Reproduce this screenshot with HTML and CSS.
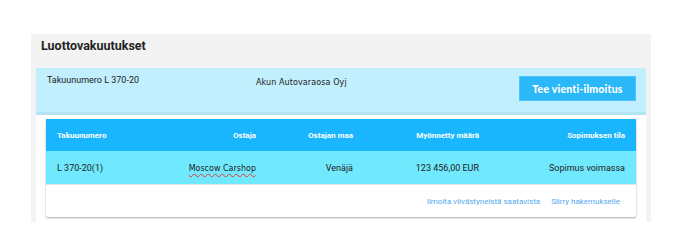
FILE: index.html
```html
<!DOCTYPE html>
<html lang="fi">
<head>
    <meta charset="UTF-8">
    <title>Luottovakuutukset</title>
    <link rel="stylesheet" href="styles.css">
</head>
<body>
    <div class="panel">
        <h2 class="panel-title">Luottovakuutukset</h2>
        <div class="panel-body">
            <div class="policy-head">
                <div class="policy-number">Takuunumero L 370-20</div>
                <div class="policy-company">Akun Autovaraosa Oyj</div>
                <button class="btn-export">Tee vienti-ilmoitus</button>
            </div>

            <div class="card">
                <div class="grid-row grid-head">
                    <div class="cell-left">Takuunumero</div>
                    <div>Ostaja</div>
                    <div>Ostajan maa</div>
                    <div>Myönnetty määrä</div>
                    <div>Sopimuksen tila</div>
                </div>
                <div class="grid-row grid-body">
                    <div class="cell-left">L 370-20(1)</div>
                    <div><span class="buyer">Moscow Carshop</span></div>
                    <div>Venäjä</div>
                    <div>123 456,00 EUR</div>
                    <div>Sopimus voimassa</div>
                </div>
                <div class="card-actions">
                    <a href="#">Ilmoita viivästyneistä saatavista</a>
                    <a href="#">Siirry hakemukselle</a>
                </div>
            </div>
        </div>
    </div>
</body>
</html>
```

FILE: styles.css
```css
body {
    margin: 0;
    background-color: #fff;
    font-family: Roboto, Arial, sans-serif;
    color: #222;
}

.panel {
    margin: 34px 35px 0 31px;
    background-color: #f3f3f3;
    padding: 0 5px;
}

.panel-title {
    margin: 0;
    height: 34px;
    padding-left: 5px;
    font-size: 12.5px;
    font-weight: 700;
    line-height: 24px;
    color: #222;
}

.panel-body {
    background-color: #fff;
    padding-bottom: 5px;
}

.policy-head {
    display: flex;
    align-items: flex-start;
    height: 44px;
    padding: 0 10px 0 11px;
    background-color: #c1effd;
    border-bottom: 3px solid #b4e4f1;
}

.policy-number {
    width: 209px;
    margin-top: 7px;
    font-size: 9px;
}

.policy-company {
    flex: 1;
    margin-top: 10px;
    font-family: "DejaVu Sans", sans-serif;
    font-size: 8px;
    letter-spacing: 0.1px;
}

.btn-export {
    margin-top: 8px;
    width: 117px;
    height: 25px;
    background-color: #2ab8f8;
    border: 1px solid #4cc6fa;
    color: #fff;
    font-family: Lato, sans-serif;
    font-weight: 900;
    font-size: 10.5px;
    letter-spacing: 0.2px;
    cursor: pointer;
}

.card {
    margin: 4px 10px 0 10px;
    background-color: #fff;
    border-radius: 2px;
    box-shadow: 0 1px 2px rgba(0, 0, 0, 0.35);
}

.grid-row {
    display: grid;
    grid-template-columns: 99px 100px 97px 126px 146px;
    align-items: center;
    padding: 0 11px;
    text-align: right;
}

.cell-left {
    text-align: left;
}

.grid-head {
    height: 32px;
    background-color: #19b5fd;
    color: #fff;
    font-size: 8px;
    font-weight: 700;
}

.grid-body {
    height: 33px;
    background-color: #70e9fe;
    font-size: 9px;
    border-bottom: 1px solid #dfe6e8;
}

.buyer {
    font-family: "DejaVu Sans", sans-serif;
    font-size: 8px;
    text-decoration: underline wavy #e33;
    text-underline-offset: 2px;
}

.card-actions {
    display: flex;
    justify-content: flex-end;
    gap: 11px;
    height: 32px;
    align-items: center;
    padding-right: 16px;
}

.card-actions a {
    color: #52aaf0;
    font-size: 8px;
    text-decoration: none;
}
```
